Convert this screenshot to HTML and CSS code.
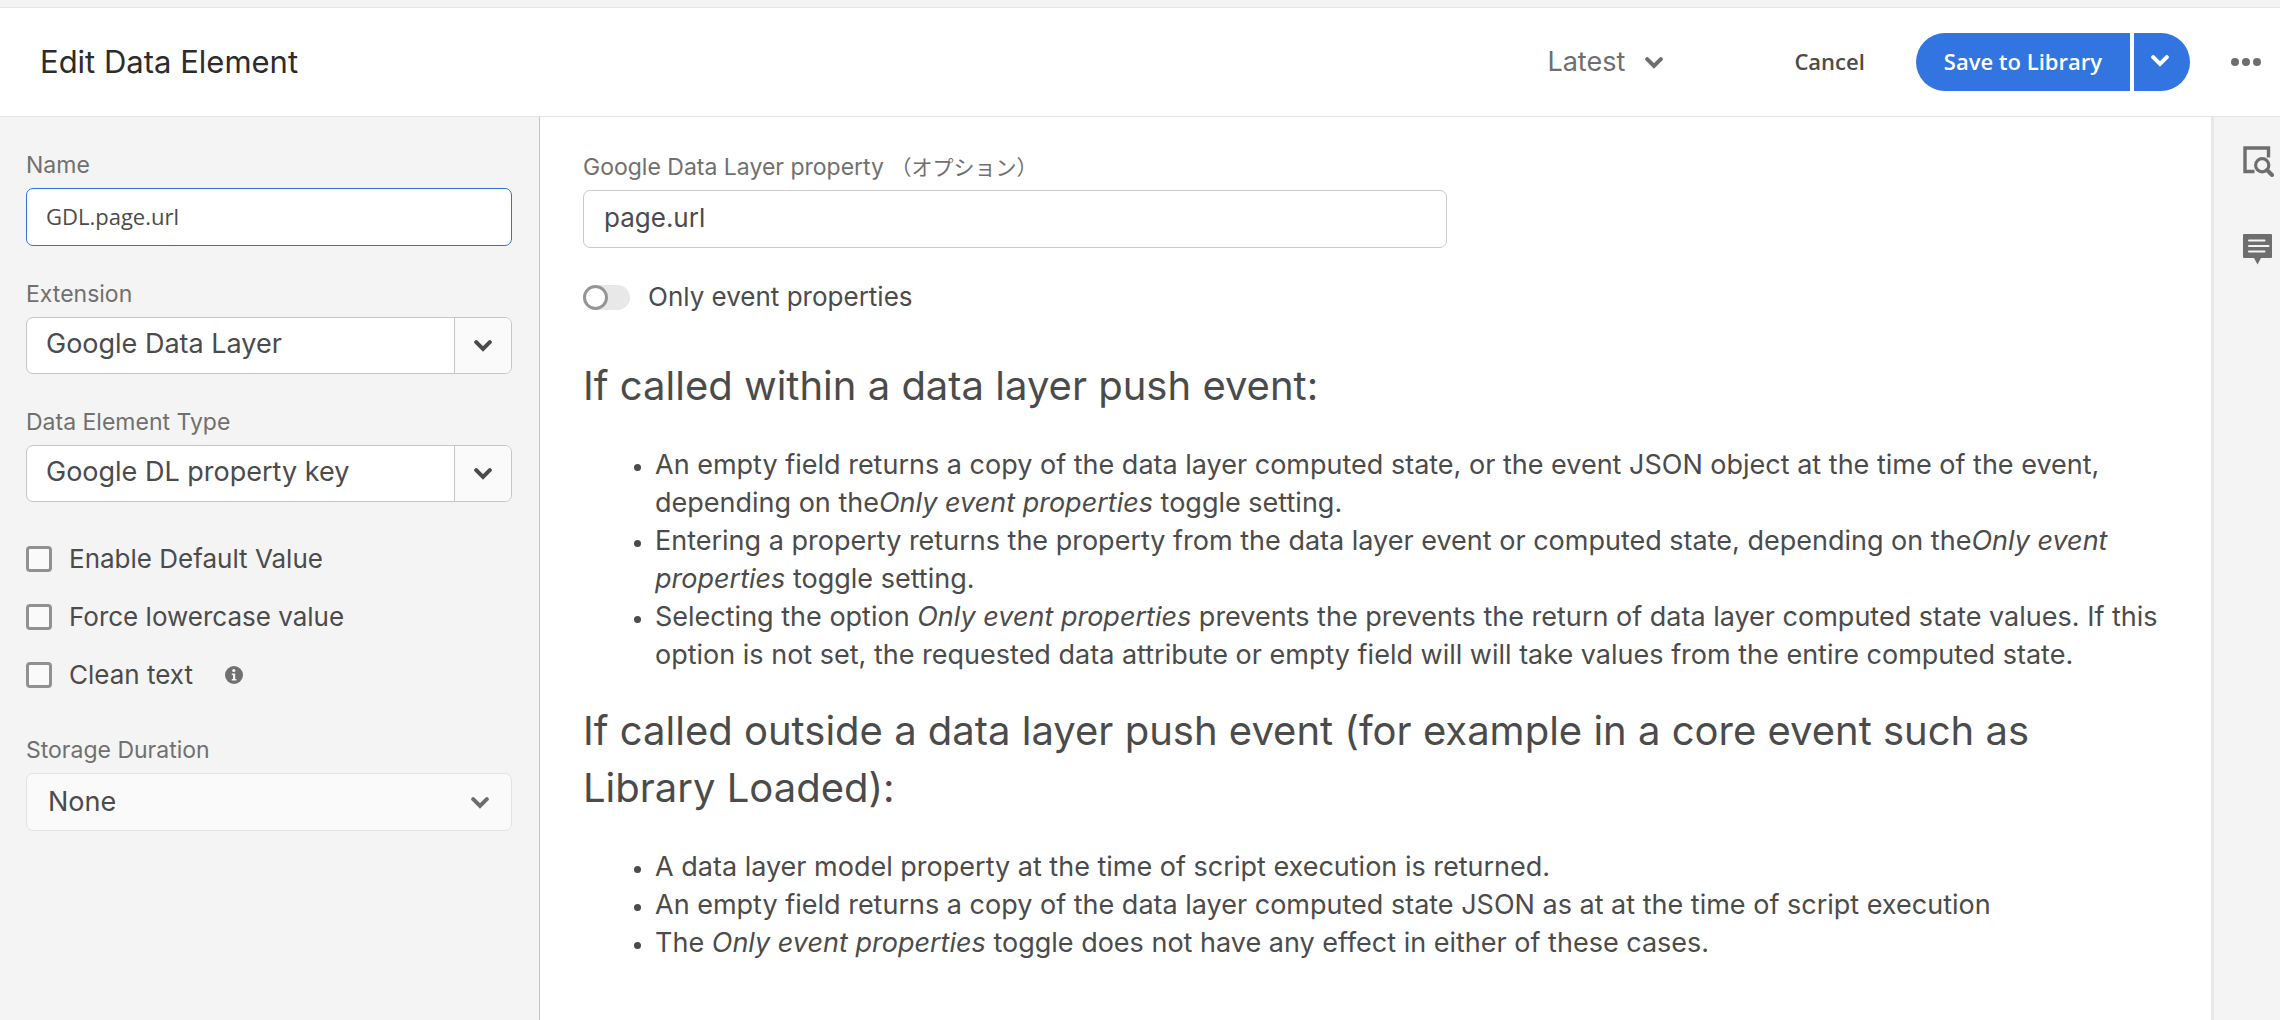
FILE: index.html
```html
<!DOCTYPE html>
<html lang="en">
<head>
  <meta charset="utf-8">
  <title>Edit Data Element</title>
  <link rel="stylesheet" href="styles.css">
</head>
<body>
  <svg class="symbols" aria-hidden="true">
    <symbol id="chevron" viewBox="0 0 18 12">
      <path d="M2.200 2.200 9 8.900l6.800-6.700" fill="none" stroke="currentColor" stroke-width="4" stroke-linecap="round" stroke-linejoin="miter"/>
    </symbol>
  </svg>

  <header class="header">
    <h1 class="title">Edit Data Element</h1>
    <div class="version">
      <select class="version-select" aria-label="Library version"><option>Latest</option></select>
      <svg class="chevron version-chevron"><use href="#chevron"/></svg>
    </div>
    <button class="cancel" type="button">Cancel</button>
    <div class="split">
      <button class="save" type="button">Save to Library</button>
      <button class="save-menu" type="button" aria-label="More save options"><svg class="chevron"><use href="#chevron"/></svg></button>
    </div>
    <button class="icon-button" type="button" aria-label="More actions">
      <svg width="30" height="10" viewBox="0 0 30 10" fill="currentColor"><circle cx="4" cy="5" r="4"/><circle cx="15" cy="5" r="4"/><circle cx="26" cy="5" r="4"/></svg>
    </button>
  </header>

  <div class="workspace">
    <form class="sidebar">
      <div class="field">
        <label class="label" for="name">Name</label>
        <input class="input input-active" id="name" type="text" value="GDL.page.url">
      </div>
      <div class="field">
        <label class="label" for="extension">Extension</label>
        <div class="combo">
          <input class="combo-input" id="extension" type="text" value="Google Data Layer">
          <button class="combo-button" type="button" aria-label="Show extensions"><svg class="chevron"><use href="#chevron"/></svg></button>
        </div>
      </div>
      <div class="field">
        <label class="label" for="type">Data Element Type</label>
        <div class="combo">
          <input class="combo-input" id="type" type="text" value="Google DL property key">
          <button class="combo-button" type="button" aria-label="Show data element types"><svg class="chevron"><use href="#chevron"/></svg></button>
        </div>
      </div>
      <div class="checks">
        <label class="check"><input class="box" type="checkbox">Enable Default Value</label>
        <label class="check"><input class="box" type="checkbox">Force lowercase value</label>
        <div class="check-line">
          <label class="check"><input class="box" type="checkbox">Clean text</label>
          <svg class="info" width="18" height="18" viewBox="0 0 18 18" role="img" aria-label="Information"><circle cx="9" cy="9" r="9" fill="#707070"/><circle cx="8.800" cy="4.500" r="1.600" fill="#f4f4f4"/><path d="M6.800 7.400h3.400v5.600h1.200v1.600H6.800V13H8V9H6.800z" fill="#f4f4f4"/></svg>
        </div>
      </div>
      <div class="field">
        <label class="label" for="duration">Storage Duration</label>
        <div class="picker">
          <select class="picker-select" id="duration"><option>None</option></select>
          <svg class="chevron picker-chevron"><use href="#chevron"/></svg>
        </div>
      </div>
    </form>

    <main class="main">
      <div class="field property">
        <label class="label" for="property">Google Data Layer property <span class="optional" lang="ja">（オプション）</span></label>
        <input class="input input-plain" id="property" type="text" value="page.url">
      </div>
      <label class="toggle"><input class="switch" type="checkbox" role="switch">Only event properties</label>

      <h2 class="heading">If called within a data layer push event:</h2>
      <ul class="list">
        <li>An empty field returns a copy of the data layer computed state, or the event JSON object at the time of the event, depending on the<em>Only event properties</em> toggle setting.</li>
        <li>Entering a property returns the property from the data layer event or computed state, depending on the<em>Only event properties</em> toggle setting.</li>
        <li>Selecting the option <em>Only event properties</em> prevents the prevents the return of data layer computed state values. If this option is not set, the requested data attribute or empty field will will take values from the entire computed state.</li>
      </ul>

      <h2 class="heading">If called outside a data layer push event (for example in a core event such as Library Loaded):</h2>
      <ul class="list">
        <li>A data layer model property at the time of script execution is returned.</li>
        <li>An empty field returns a copy of the data layer computed state JSON as at at the time of script execution</li>
        <li>The <em>Only event properties</em> toggle does not have any effect in either of these cases.</li>
      </ul>
    </main>

    <aside class="rail">
      <button class="icon-button" type="button" aria-label="Inspect">
        <svg width="31" height="31" viewBox="0 0 31 31" fill="none" stroke="currentColor"><path d="M11.500 25.500H2V2h23.500v9.500" stroke-width="3.400"/><circle cx="19.200" cy="19.200" r="6.600" stroke-width="3.200"/><path d="m24 24 5 5" stroke-width="4" stroke-linecap="round"/></svg>
      </button>
      <button class="icon-button" type="button" aria-label="Comments">
        <svg width="31" height="31" viewBox="0 0 31 31"><path d="M1 0h27q1 0 1 1v22q0 1-1 1H18l-3.500 6.500L11 24H1q-1 0-1-1V1q0-1 1-1z" fill="currentColor"/><path d="M6 6.500h15.500M6 12h19.500M6 17.500h15.500" stroke="#f4f4f4" stroke-width="2" stroke-linecap="round"/></svg>
      </button>
    </aside>
  </div>
</body>
</html>
```
FILE: styles.css
```css
*,
*::before {
  box-sizing: border-box;
}

body {
  display: flex;
  flex-direction: column;
  min-height: 100vh;
  margin: 0;
  border-top: 7px solid #f4f4f4;
  background: #fff;
  color: #4b4b4b;
  font-family: Inter, "Noto Sans CJK JP", sans-serif;
  font-size: 27px;
}

button,
input,
select {
  margin: 0;
  padding: 0;
  border: 0;
  border-radius: 0;
  outline: 0;
  background: none;
  color: inherit;
  font: inherit;
  appearance: none;
}

.symbols {
  position: absolute;
  width: 0;
  height: 0;
}

.chevron {
  display: block;
  width: 18px;
  height: 12px;
}

/* Header */

.header {
  display: flex;
  align-items: center;
  height: 110px;
  padding: 0 19px 1px 40px;
  border-top: 1px solid #e4e4e4;
  border-bottom: 1px solid #e4e4e4;
}

.title {
  flex: 1;
  margin: 0;
  padding-bottom: 1px;
  color: #2c2c2c;
  font-size: 31px;
  font-weight: 400;
}

.version,
.picker {
  position: relative;
}

.version-select {
  width: 116px;
  padding-bottom: 1px;
  color: #6e6e6e;
}

.version-chevron {
  position: absolute;
  top: 12px;
  right: 0;
  color: #6e6e6e;
  pointer-events: none;
}

.cancel {
  margin: 0 51px 0 131px;
  padding-bottom: 2px;
  font-family: "Open Sans", sans-serif;
  font-size: 22px;
  font-weight: 600;
}

.split {
  display: flex;
  gap: 4px;
  height: 58px;
  margin-right: 41px;
  color: #fff;
}

.save {
  padding: 0 28px 2px;
  border-radius: 29px 0 0 29px;
  background: #3274e0;
  font-family: "Open Sans", sans-serif;
  font-size: 22px;
  font-weight: 600;
}

.save-menu {
  width: 56px;
  padding: 0 0 2px 17px;
  border-radius: 0 29px 29px 0;
  background: #3274e0;
}

.icon-button {
  display: flex;
  color: #6e6e6e;
}

/* Columns */

.workspace {
  display: flex;
  flex: 1;
}

.sidebar {
  display: flex;
  flex-direction: column;
  gap: 34px;
  width: 540px;
  padding: 34px 27px 34px 26px;
  border-right: 1px solid #c6c6c6;
  background: #f4f4f4;
}

.main {
  flex: 1;
  padding: 36px 48px 36px 43px;
}

.rail {
  display: flex;
  flex-direction: column;
  gap: 57px;
  width: 69px;
  padding: 29px 0 0 29px;
  border-left: 3px solid #e8e8e8;
  background: #f4f4f4;
}

/* Form controls */

.field {
  display: flex;
  flex-direction: column;
  gap: 9px;
}

.label {
  height: 28px;
  color: #707070;
  font-size: 23px;
  line-height: 28px;
}

.optional {
  font-size: 21px;
}

.input {
  height: 58px;
  padding: 0 20px 4px;
  border: 1px solid #cacaca;
  border-radius: 7px;
  background: #fff;
}

.input-active {
  padding: 0 19px 3px;
  border-color: #2f73dd;
  font-family: "Open Sans", sans-serif;
  font-size: 22px;
  font-weight: 500;
}

.input-plain {
  font-size: 26px;
}

.combo {
  display: flex;
  height: 57px;
  overflow: hidden;
  border: 1px solid #c6c6c6;
  border-radius: 7px;
  background: #fff;
}

.combo-input {
  flex: 1;
  min-width: 0;
  padding: 0 19px 4px;
}

.combo-button {
  width: 57px;
  padding-left: 19px;
  border-left: 1px solid #c6c6c6;
  background: #fafafa;
}

.checks {
  display: flex;
  flex-direction: column;
  gap: 30px;
  padding: 9px 0 13px;
}

.check,
.check-line,
.toggle {
  display: flex;
  align-items: center;
  height: 28px;
  font-size: 26px;
  line-height: 28px;
}

.check {
  gap: 17px;
}

.check-line {
  gap: 32px;
}

.box {
  width: 26px;
  height: 26px;
  border: 3px solid #919191;
  border-radius: 4px;
  background: #fafafa;
}

.picker-select {
  width: 100%;
  height: 58px;
  padding: 0 21px 2px;
  border: 1px solid #e2e2e2;
  border-radius: 7px;
  background: #fafafa;
}

.picker-chevron {
  position: absolute;
  top: 24px;
  right: 23px;
  color: #6e6e6e;
  pointer-events: none;
}

.property {
  max-width: 864px;
}

.toggle {
  gap: 18px;
  margin-top: 35px;
}

.switch {
  display: flex;
  width: 47px;
  height: 25px;
  border-radius: 13px;
  background: #e8e8e8;
}

.switch::before {
  width: 25px;
  height: 25px;
  border: 3px solid #959595;
  border-radius: 50%;
  background: #fff;
  content: "";
}

/* Help text */

.heading {
  margin: 28px 0 32px;
  font-size: 40px;
  font-weight: 400;
  line-height: 57px;
}

.toggle + .heading {
  margin-top: 46px;
}

.list {
  margin: 0;
  padding-left: 72px;
  line-height: 38px;
}

.list li::marker {
  font-size: 23px;
}
```
